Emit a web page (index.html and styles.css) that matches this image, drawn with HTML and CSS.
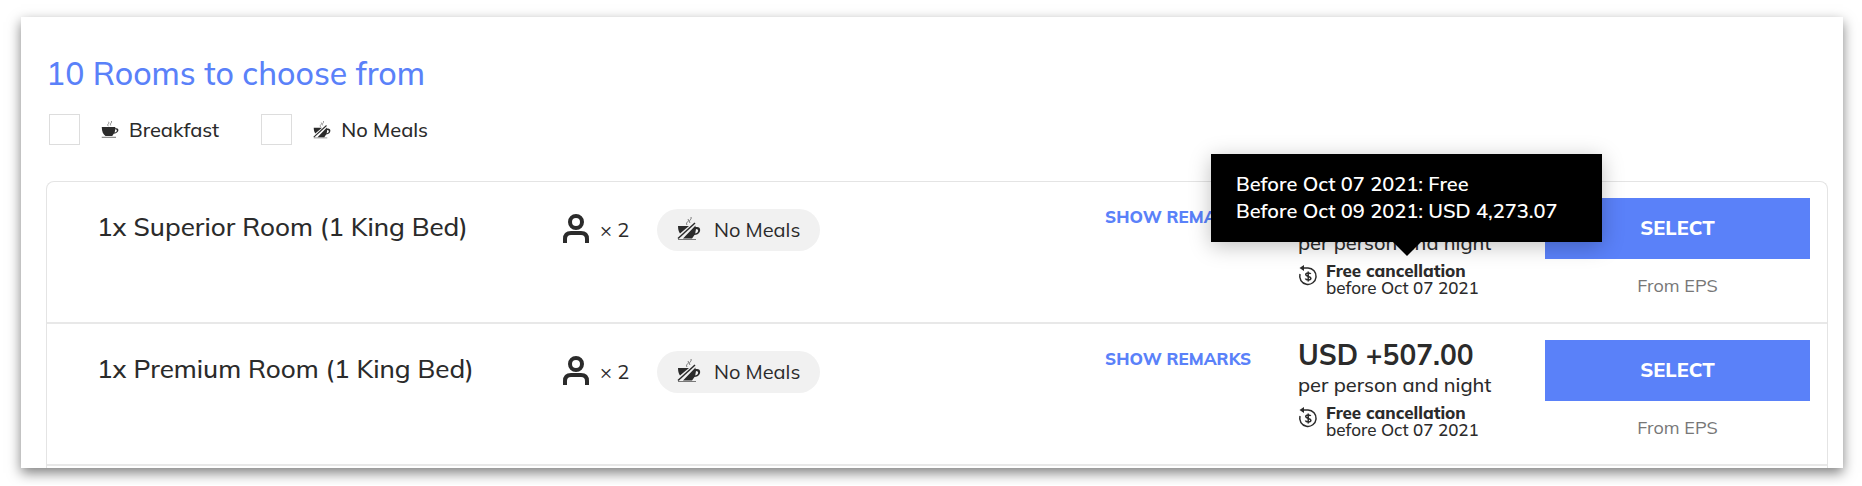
FILE: index.html
```html
<!DOCTYPE html>
<html lang="en">
<head>
  <meta charset="UTF-8">
  <title>Rooms</title>
  <link rel="stylesheet" href="styles.css">
</head>
<body>
  <!-- shared icons -->
  <svg class="sprite" aria-hidden="true">
    <symbol id="cup" viewBox="0 0 24 24">
      <path d="M1 8h18v1.500h1.500c4.500 0 3.500 7-3.500 7.500l-2 3H6C3 18 1 14 1 8zM19 11l-.8 4.500c3.500-.7 4-4.500 .8-4.500z" fill-rule="evenodd"/>
      <path d="M1 21h19v1.500H1z" opacity=".6"/>
      <path d="M10 7c-3-3 2-3 0-6M13 6c-2-3 2-3 1-6" fill="none" stroke="currentColor" opacity=".7"/>
    </symbol>
    <symbol id="no-meals" viewBox="0 0 24 24">
      <path d="M1 9h11L3 16.500C1.700 15 1 12 1 9z"/>
      <path d="M18.500 8.500v1.500H20c5 0 4 7.500-2.500 8L15 21.500H6z M19 12l-.8 4.500c3.500-.6 4-4.500 .8-4.500z" fill-rule="evenodd"/>
      <path d="M1 21.500L18 6" fill="none" stroke="currentColor" stroke-width="1.500"/>
      <path d="M10 8c-2-3 3-3 1-6M13 6c-2-3 2-3 1-6" fill="none" stroke="currentColor" opacity=".6"/>
      <path d="M1 22.500h18" stroke="currentColor" opacity=".6"/>
    </symbol>
    <symbol id="person" viewBox="0 0 26 30">
      <g fill="none" stroke="currentColor" stroke-width="4">
        <circle cx="13" cy="8" r="6"/>
        <path d="M2 29v-4q0-6 6-6h10q6 0 6 6v4"/>
      </g>
    </symbol>
    <symbol id="refund" viewBox="0 0 20 22">
      <g fill="none" stroke="currentColor" stroke-width="1.500">
        <path d="M3 4h7a8.200 8.200 0 1 1-8 6"/>
        <path d="M12.700 10c-.5-1.500-5-1.600-5 .6 0 2.300 5.200 1.300 5.200 3.700 0 2.200-4.900 2-5.500.2M10.200 7.500v10"/>
      </g>
      <path d="M6 1v6L1.500 4z"/>
    </symbol>
  </svg>

  <main class="card">
    <h1>10 Rooms to choose from</h1>

    <form class="filters">
      <label class="filter">
        <input type="checkbox" name="breakfast">
        <svg class="meal-icon"><use href="#cup"/></svg>
        <span>Breakfast</span>
      </label>
      <label class="filter">
        <input type="checkbox" name="no-meals">
        <svg class="meal-icon"><use href="#no-meals"/></svg>
        <span>No Meals</span>
      </label>
    </form>

    <ul class="rooms">
      <li class="room">
        <h2>1x Superior Room (1 King Bed)</h2>
        <div class="guests"><svg><use href="#person"/></svg> × 2</div>
        <div class="board"><svg><use href="#no-meals"/></svg>No Meals</div>
        <a class="remarks" href="#">SHOW REMARKS</a>
        <div class="rate">
          <div class="price"></div>
          <div class="per">per person and night</div>
          <div class="cancellation">
            <svg><use href="#refund"/></svg>
            <div><strong>Free cancellation</strong><br>before Oct 07 2021</div>
            <div class="tooltip" role="tooltip">Before Oct 07 2021: Free<br>Before Oct 09 2021: USD 4,273.07</div>
          </div>
        </div>
        <div class="action">
          <button type="button">SELECT</button>
          <p>From EPS</p>
        </div>
      </li>
      <li class="room">
        <h2>1x Premium Room (1 King Bed)</h2>
        <div class="guests"><svg><use href="#person"/></svg> × 2</div>
        <div class="board"><svg><use href="#no-meals"/></svg>No Meals</div>
        <a class="remarks" href="#">SHOW REMARKS</a>
        <div class="rate">
          <div class="price">USD +507.00</div>
          <div class="per">per person and night</div>
          <div class="cancellation">
            <svg><use href="#refund"/></svg>
            <div><strong>Free cancellation</strong><br>before Oct 07 2021</div>
          </div>
        </div>
        <div class="action">
          <button type="button">SELECT</button>
          <p>From EPS</p>
        </div>
      </li>
    </ul>
  </main>
</body>
</html>
```
FILE: styles.css
```css
* {
  box-sizing: border-box;
}

body {
  margin: 0;
  padding: 17px 19px 17px 21px;
  background: #fff;
  color: #2b2b2b;
  font-family: Mulish, Muli, "Noto Sans", sans-serif;
  font-size: 20px;
  line-height: 27px;
}

.sprite {
  display: block;
  width: 0;
  height: 0;
}

svg {
  flex: none;
  fill: currentColor;
}

h1, h2, p, ul {
  margin: 0;
  padding: 0;
  font-weight: normal;
}

.card {
  padding: 34px 15px 0 25px;
  background: #fff;
  box-shadow: 0 5px 12px rgba(0, 0, 0, 0.5);
}

h1 {
  color: #5a81f9;
  font-size: 32px;
  font-weight: 500;
  line-height: 44px;
}

/* meal filters */
.filters {
  display: flex;
  gap: 42px;
  padding: 19px 3px 36px;
}

.filter {
  display: flex;
  align-items: center;
}

.filter input {
  appearance: none;
  width: 31px;
  height: 31px;
  margin: 0 21px 0 0;
  border: 1px solid #ddd;
  background: #fff;
}

.filter span {
  font-weight: 500;
}

.meal-icon {
  width: 18px;
  height: 18px;
  margin-right: 10px;
}

/* room list */
.rooms {
  list-style: none;
  padding-bottom: 2px;
  border: 1px solid #e4e4e4;
  border-bottom: 0;
  border-radius: 8px 8px 0 0;
}

.room {
  display: grid;
  grid-template-columns: 466px 94px 1fr 193px 247px 265px;
  align-items: start;
  height: 142px;
  padding: 16px 17px 0 50px;
  border-bottom: 2px solid #e8e8e8;
}

h2 {
  padding-top: 12px;
  font-size: 26px;
  font-weight: 500;
  line-height: 34px;
}

.guests {
  display: flex;
  align-items: center;
  gap: 11px;
  padding-top: 16px;
}

.guests svg {
  width: 26px;
  height: 30px;
}

.board {
  display: flex;
  align-items: center;
  justify-self: start;
  gap: 13px;
  height: 42px;
  margin-top: 11px;
  padding: 0 20px 2px;
  border-radius: 21px;
  background: #f1f1f1;
}

.board svg {
  width: 24px;
  height: 24px;
}

.remarks {
  padding-top: 5px;
  color: #5a81f9;
  font-size: 17px;
  font-weight: 800;
  text-decoration: none;
}

.price {
  height: 31px;
  font-size: 28px;
  font-weight: bold;
  line-height: 30px;
}

.per {
  font-weight: 500;
}

.cancellation {
  position: relative;
  display: flex;
  gap: 8px;
  margin-top: 6px;
  font-size: 17px;
  font-weight: 500;
  line-height: 17px;
}

.cancellation strong {
  font-weight: 800;
}

.cancellation svg {
  width: 20px;
  height: 22px;
  margin-top: 2px;
}

.tooltip {
  position: absolute;
  bottom: 100%;
  left: -87px;
  z-index: 1;
  width: 391px;
  margin-bottom: 20px;
  padding: 16px 25px 18px;
  background: #000;
  box-shadow: 0 4px 20px rgba(0, 0, 0, 0.25);
  color: #fff;
  font-size: 20px;
  font-weight: 600;
  line-height: 27px;
  white-space: nowrap;
}

.tooltip::after {
  content: "";
  position: absolute;
  top: 100%;
  left: 50%;
  margin-left: -14px;
  border: 14px solid transparent;
  border-top-color: #000;
  border-bottom: 0;
}

.action {
  text-align: center;
}

.action button {
  width: 100%;
  height: 61px;
  padding: 0 0 2px;
  border: 0;
  background: #5a81f9;
  color: #fff;
  font: 800 20px Mulish, Muli, "Noto Sans", sans-serif;
}

.action p {
  padding-top: 13px;
  color: #777;
  font-size: 18px;
}
```
